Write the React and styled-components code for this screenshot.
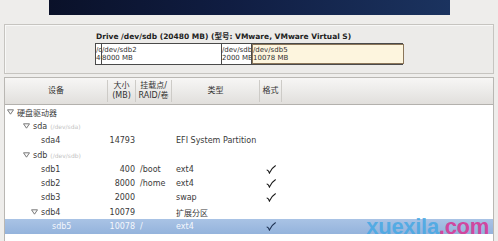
import React from "react";
import styled, { createGlobalStyle } from "styled-components";

// data
const segments = [
  { name: "/dev/sdb1", size: "400 MB", width: 6 },
  { name: "/dev/sdb2", size: "8000 MB", width: 120 },
  { name: "/dev/sdb3", size: "2000 MB", width: 30 },
  { name: "/dev/sdb5", size: "10078 MB", width: 152, logical: true },
];

const rows = [
  { label: "硬盘驱动器", text: 12, expander: true },
  { label: "sda", sub: "(/dev/sda)", text: 28, expander: true },
  { label: "sda4", text: 36, size: "14793", type: "EFI System Partition" },
  { label: "sdb", sub: "(/dev/sdb)", text: 28, expander: true },
  { label: "sdb1", text: 36, size: "400", mount: "/boot", type: "ext4", format: true },
  { label: "sdb2", text: 36, size: "8000", mount: "/home", type: "ext4", format: true },
  { label: "sdb3", text: 36, size: "2000", type: "swap", format: true },
  { label: "sdb4", text: 36, size: "10079", type: "扩展分区", expander: true },
  { label: "sdb5", text: 47, size: "10078", mount: "/", type: "ext4", format: true, selected: true },
];

const GlobalStyle = createGlobalStyle`
  html, body {
    margin: 0;
    padding: 0;
    background: #eeedeb;
    overflow: hidden;
  }
  body {
    font-family: "DejaVu Sans", "Noto Sans CJK SC", sans-serif;
    color: #3a3a3a;
  }
`;

const Expander = () => (
  <Tri width="7" height="6" viewBox="0 0 7 6">
    <path d="M0.5 0.8 L6.5 0.8 L3.5 5.2 Z" fill="#fafafa" stroke="#6b6b6b" strokeWidth="0.9" />
  </Tri>
);

const Check = ({ selected }) => (
  <svg width="10" height="9" viewBox="0 0 10 9">
    <path
      d="M1 5 C2 5.2 2.8 6.2 3.4 8 C4.8 4.8 6.8 2.4 9.4 0.8"
      fill="none"
      stroke={selected ? "#1f3354" : "#1a1a1a"}
      strokeWidth="1.1"
      strokeLinecap="round"
    />
  </svg>
);

const App = () => {
  return (
    <Page>
      <GlobalStyle />
      <Banner />

      <DrivePanel>
        <DriveTitle>Drive /dev/sdb (20480 MB) (型号: VMware, VMware Virtual S)</DriveTitle>
        <Bar>
          {segments.map((s, i) => (
            <Segment key={i} style={{ width: s.width }} $logical={s.logical}>
              <SegLine>{s.name}</SegLine>
              <SegLine>{s.size}</SegLine>
            </Segment>
          ))}
        </Bar>
      </DrivePanel>

      <TablePanel>
        <HeaderRow>
          <HeadCell>设备</HeadCell>
          <HeadCell>
            大小
            <br />
            (MB)
          </HeadCell>
          <HeadCell>
            挂载点/
            <br />
            RAID/卷
          </HeadCell>
          <HeadCell>类型</HeadCell>
          <HeadCell>格式</HeadCell>
          <HeadCell $last />
        </HeaderRow>

        {rows.map((r, i) => (
          <Row key={i} $selected={r.selected}>
            <DeviceCell style={{ paddingLeft: r.expander ? r.text - 10 : r.text }}>
              {r.expander && <Expander />}
              {r.label}
              {r.sub && <SubLabel>{r.sub}</SubLabel>}
            </DeviceCell>
            <SizeCell>{r.size}</SizeCell>
            <TextCell>{r.mount}</TextCell>
            <TextCell>{r.type}</TextCell>
            <CheckCell>{r.format && <Check selected={r.selected} />}</CheckCell>
            <div />
          </Row>
        ))}

        <Watermark>
          xuexila<Dot>.com</Dot>
        </Watermark>
      </TablePanel>
    </Page>
  );
};

const Page = styled.div`
  width: 498px;
  height: 241px;
  overflow: hidden;
  position: relative;
`;

const Banner = styled.div`
  margin-left: 49px;
  width: 401px;
  height: 15px;
  background: linear-gradient(90deg, #0a1129 0%, #101d42 45%, #1b335f 100%);
`;

const DrivePanel = styled.div`
  margin: 9px 4px 0 4px;
  height: 48px;
  border: 1px solid #c6c4c0;
  box-shadow: inset 1px 1px 0 #f8f8f7;
  background: #ecebe9;
  padding-left: 90px;
  display: flex;
  flex-direction: column;
`;

const DriveTitle = styled.div`
  margin-top: 7px;
  margin-left: 1px;
  height: 10px;
  font-size: 7.5px;
  font-weight: bold;
  line-height: 10px;
  color: #222;
  white-space: nowrap;
`;

const Bar = styled.div`
  margin-top: 1px;
  display: flex;
  width: 306px;
  height: 20px;
  border: 1px solid #4a4a4a;
  background: #fff;
`;

const Segment = styled.div`
  flex: none;
  overflow: hidden;
  display: flex;
  flex-direction: column;
  justify-content: center;
  font-size: 7px;
  line-height: 8px;
  color: #333;
  white-space: nowrap;
  box-sizing: border-box;
  border-right: 1px solid #4a4a4a;
  background: ${({ $logical }) => ($logical ? "#fdf5de" : "#fff")};
  ${({ $logical }) => $logical && "border: 1px solid #8a7559;"}

  &:last-child {
    border-right: ${({ $logical }) => ($logical ? "1px solid #8a7559" : "none")};
  }
`;

const SegLine = styled.span`
  display: block;
  overflow: hidden;
  max-width: 100%;
`;

const TablePanel = styled.div`
  position: relative;
  margin: 3px 4px 0 4px;
  height: 200px;
  border: 1px solid #b9b7b3;
  border-bottom: none;
  background: #fff;
`;

const HeaderRow = styled.div`
  display: grid;
  grid-template-columns: 103px 28px 36px 88px 22px 1fr;
  height: 26px;
  background: linear-gradient(180deg, #f7f6f5 0%, #ecebe9 50%, #e1dfdc 100%);
  border-bottom: 1px solid #b3b1ad;
`;

const HeadCell = styled.div`
  display: flex;
  align-items: center;
  justify-content: center;
  text-align: center;
  font-size: 8px;
  line-height: 10px;
  color: #333;
  border-right: ${({ $last }) => ($last ? "none" : "1px solid #cdcbc7")};
  margin: 2px 0;
  white-space: nowrap;
`;

const Row = styled.div`
  display: grid;
  grid-template-columns: 103px 28px 36px 88px 22px 1fr;
  height: 14.3px;
  align-items: center;
  font-size: 8px;
  color: ${({ $selected }) => ($selected ? "#f4f7fc" : "#3a3a3a")};
  background: ${({ $selected }) =>
    $selected ? "linear-gradient(180deg, #a9c3e5 0%, #94b3dc 100%)" : "transparent"};
  white-space: nowrap;
`;

const DeviceCell = styled.div`
  display: flex;
  align-items: center;
`;

const Tri = styled.svg`
  margin-right: 3px;
  flex: none;
`;

const SubLabel = styled.span`
  margin-left: 3px;
  font-size: 6px;
  color: #c2c2c2;
`;

const SizeCell = styled.div`
  text-align: right;
  padding-right: 1px;
`;

const TextCell = styled.div`
  padding-left: 4px;
`;

const CheckCell = styled.div`
  display: flex;
  justify-content: center;
  align-items: center;
`;

const Watermark = styled.div`
  position: absolute;
  right: 4px;
  top: 138px;
  font-family: "Liberation Sans", Arial, sans-serif;
  font-weight: bold;
  font-size: 22px;
  line-height: 22px;
  color: rgba(70, 168, 228, 0.85);
  letter-spacing: -0.3px;
`;

const Dot = styled.span`
  color: #d0479f;
`;

export default App;
